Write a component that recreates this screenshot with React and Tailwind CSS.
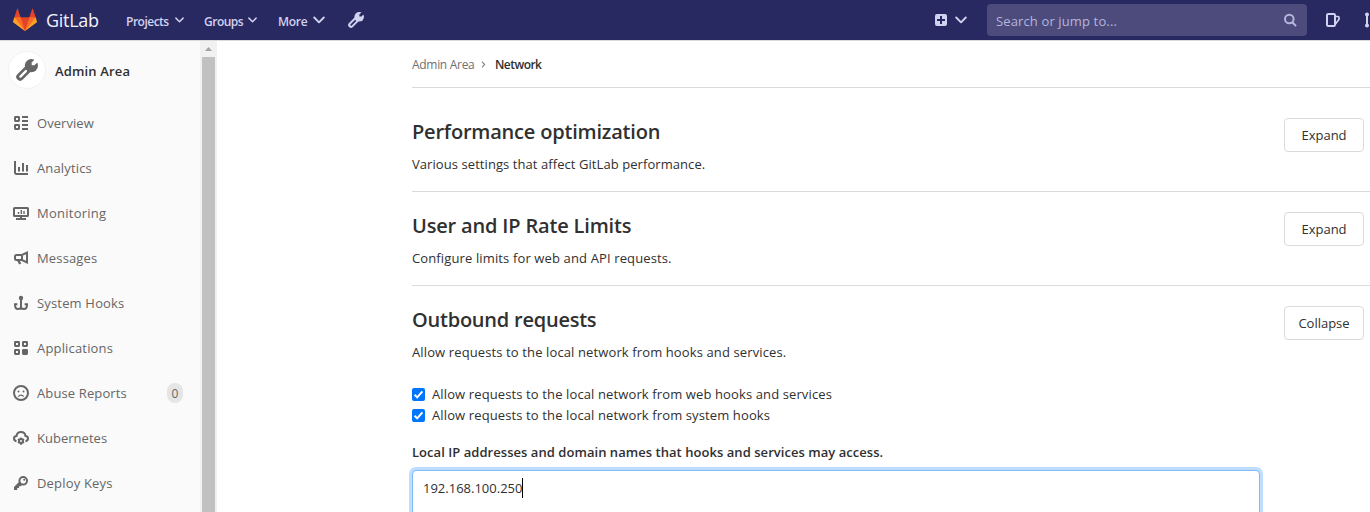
import React, { useId } from "react";

function Icon({ children, className = "size-4" }) {
  return (
    <svg
      viewBox="0 0 16 16"
      className={className + " shrink-0"}
      fill="none"
      stroke="currentColor"
      strokeWidth="2"
    >
      {children}
    </svg>
  );
}

function Chevron({ className }) {
  return (
    <svg viewBox="0 0 12 8" className={className + " shrink-0"} fill="none" stroke="currentColor" strokeWidth="1.9" strokeLinecap="round" strokeLinejoin="round">
      <path d="M1.2 1.5 6 6.3l4.8-4.8" />
    </svg>
  );
}

function Wrench({ className }) {
  const id = useId();
  return (
    <svg viewBox="0 0 16 16" className={className + " shrink-0"}>
      <mask id={id} maskUnits="userSpaceOnUse" x="0" y="0" width="16" height="16">
        <circle cx="11.2" cy="4.8" r="4.8" fill="#fff" />
        <path d="M3 13l6-6" stroke="#fff" strokeWidth="5.600" strokeLinecap="round" />
        <path d="M3.200 12.800l4-4" stroke="#000" strokeWidth="1.700" strokeLinecap="round" />
        <path d="M16.300 -2.500 11.400 2.600v2h2l5-5z" fill="#000" />
      </mask>
      <rect width="16" height="16" fill="currentColor" mask={`url(#${id})`} />
    </svg>
  );
}

function Logo() {
  return (
    <svg viewBox="0 0 36 36" className="size-6 shrink-0">
      <path fill="#e24329" d="M2 14l9.380 9v-9l-4-12.280c-.205-.632-1.176-.632-1.380 0z" />
      <path fill="#e24329" d="M34 14l-9.380 9v-9l4-12.280c.205-.632 1.176-.632 1.380 0z" />
      <path fill="#e24329" d="M18 34.380 3 14h30z" />
      <path fill="#fc6d26" d="M18 34.380 11.380 14H2l4 11z" />
      <path fill="#fc6d26" d="M18 34.380 24.620 14H34l-4 11z" />
      <path fill="#fca326" d="M2 14 .1 20.160c-.18.565 0 1.200.5 1.560l17.420 12.660z" />
      <path fill="#fca326" d="M34 14l1.900 6.160c.18.565 0 1.200-.5 1.560L18 34.380z" />
    </svg>
  );
}

const items = [
  {
    label: "Overview",
    track: "tracking-[0.05px]",
    icon: (
      <>
        <rect x="2" y="2" width="4" height="4" rx=".4" />
        <rect x="2" y="10" width="4" height="4" rx=".4" />
        <path d="M9 2h6M9 6h6M9 10h6M9 14h6" />
      </>
    ),
  },
  {
    label: "Analytics",
    track: "tracking-[0.15px]",
    icon: <path d="M2 1v11.500a1.500 1.500 0 0 0 1.500 1.500H15M6 7v4.500M10 3v8.500M14 5v6.500" />,
  },
  {
    label: "Monitoring",
    track: "tracking-[0.25px]",
    icon: (
      <>
        <rect x="1" y="3" width="14" height="8" rx=".6" />
        <path d="M3 14h10M8 11v3" />
        <path d="M5.500 7v2M8.300 5v4M11 6v3" strokeWidth="1.400" />
      </>
    ),
  },
  {
    label: "Messages",
    track: "tracking-[0.15px]",
    icon: (
      <>
        <path d="M14 2.500v10L9 10H3.500A1.500 1.500 0 0 1 2 8.500v-2A1.500 1.500 0 0 1 3.500 5H9zM9 5v5" />
        <path d="M5 10l2.200 4" strokeWidth="2.400" />
      </>
    ),
  },
  {
    label: "System Hooks",
    track: "tracking-[0.17px]",
    icon: (
      <>
        <circle cx="8" cy="3" r="2.200" fill="currentColor" stroke="none" />
        <path d="M8 4v10M2 9.500c0 3 1 4.500 3 4.500 1.700 0 3-.8 3-2.200 0 1.400 1.300 2.200 3 2.200 2 0 3-1.500 3-4.500M1 9.200h3.400M11.600 9.200H15" />
      </>
    ),
  },
  {
    label: "Applications",
    track: "tracking-[0.17px]",
    icon: (
      <>
        <rect x="2" y="2" width="4" height="4" rx=".4" />
        <rect x="10" y="2" width="4" height="4" rx=".4" />
        <rect x="2" y="10" width="4" height="4" rx=".4" />
        <rect x="10" y="10" width="4" height="4" rx=".4" fill="currentColor" />
      </>
    ),
  },
  {
    label: "Abuse Reports",
    track: "tracking-[0.12px]",
    badge: "0",
    icon: (
      <>
        <circle cx="8" cy="8" r="7" />
        <path d="M5.400 11.600a3 3 0 0 1 5.200 0" strokeWidth="1.300" />
        <circle cx="5.500" cy="6.500" r="1" fill="currentColor" stroke="none" />
        <circle cx="10.500" cy="6.500" r="1" fill="currentColor" stroke="none" />
      </>
    ),
  },
  {
    label: "Kubernetes",
    track: "tracking-[0.02px]",
    icon: (
      <>
        <path d="M3.500 11.200C1.900 10.900 1 9.800 1 8.600c0-1.500 1.200-2.500 2.500-2.500C3.800 3.700 5.700 2 8 2s4.200 1.700 4.500 4.100c1.300 0 2.500 1 2.500 2.500 0 1.200-.9 2.300-2.500 2.600" />
        <circle cx="8" cy="11" r="2" />
        <path d="M8 7.500v1.500M8 13v2M4.900 9.200l1.400.8M9.700 12l1.400.8M11.100 9.200l-1.400.8M6.300 12l-1.400.8" strokeWidth="1.500" />
      </>
    ),
  },
  {
    label: "Deploy Keys",
    track: "tracking-[0.18px]",
    icon: (
      <>
        <circle cx="10.200" cy="5.800" r="3.800" />
        <circle cx="11.200" cy="4.800" r="1" fill="currentColor" stroke="none" />
        <path d="M6.200 6.800 1 12v3h3.200v-2H6v-1.800h1.500L9.200 9.800z" fill="currentColor" stroke="none" />
      </>
    ),
  },
];

function Section({ title, titleClass, text, textClass, action }) {
  return (
    <div className="flex h-[93px] w-[952px] justify-between">
      <div className="flex flex-col whitespace-nowrap">
        <h2 className={"mt-[19px] h-[30px] text-[20px] leading-[30px] font-semibold text-[#303030] " + titleClass}>{title}</h2>
        <p className={"mt-[7px] h-5 text-[13px] leading-5 " + textClass}>{text}</p>
      </div>
      <button className="mt-5 flex h-[34px] w-20 items-center justify-center rounded border border-[#dbdbdb] bg-white pt-px text-[13px]">
        {action}
      </button>
    </div>
  );
}

function Check({ label, className }) {
  return (
    <label className="flex h-[21px] shrink-0 items-center whitespace-nowrap">
      <svg viewBox="0 0 13 13" className="mr-[7px] size-[13px] shrink-0">
        <rect width="13" height="13" rx="2" fill="#0075ff" />
        <path d="M2.600 6.800 5.200 9.400 10.400 3.300" fill="none" stroke="#fff" strokeWidth="2" />
      </svg>
      <span className={className}>{label}</span>
    </label>
  );
}

export default function App() {
  return (
    <div className="flex h-[512px] w-full flex-col overflow-hidden bg-white font-['Open_Sans','Noto_Sans',sans-serif] text-[13px] text-[#303030]">
      <header className="flex h-[41px] shrink-0 items-center overflow-hidden border-b border-[#dbdbdb] bg-[#292961] pl-[13px] whitespace-nowrap text-[#d1d1f0] *:shrink-0">
        <Logo />
        <span className="ml-[9px] w-[80px] text-[18px] leading-none tracking-[-0.3px] text-[#f2f2fa]">GitLab</span>
        <span className="w-[49px] pt-[3px] text-[12px] font-semibold tracking-[-0.5px]">Projects</span>
        <Chevron className="h-[6px] w-[9px]" />
        <span className="ml-[20px] w-[44px] pt-[3px] text-[12px] font-semibold tracking-[-0.5px]">Groups</span>
        <Chevron className="h-[6px] w-[9px]" />
        <span className="ml-[21px] w-[35px] pt-[3px] text-[12px] font-semibold tracking-[-0.3px]">More</span>
        <Chevron className="h-2 w-3" />
        <Wrench className="ml-[23px] size-4" />
        <svg viewBox="0 0 12 12" className="ml-[571px] size-3">
          <rect width="12" height="12" rx="2" fill="#d1d1f0" />
          <path d="M6 2v8M2 6h8" stroke="#292961" strokeWidth="2" />
        </svg>
        <Chevron className="ml-2 h-2 w-3" />
        <div className="ml-5 flex h-8 w-80 items-center justify-between rounded bg-[#4c4b7c] pr-[10px] pl-[9px] text-[#b5b5dc]">
          <span className="pt-[3px] tracking-[0.13px]">Search or jump to...</span>
          <svg viewBox="0 0 14 14" className="size-[14px]" fill="none" stroke="currentColor" strokeWidth="2">
            <circle cx="6.300" cy="6" r="4.300" />
            <path d="m9.500 9.500 3 3" strokeLinecap="round" />
          </svg>
        </div>
        <svg viewBox="0 0 16 16" className="ml-[18px] size-4" fill="none" stroke="currentColor" strokeWidth="2">
          <rect x="2" y="2" width="8" height="12" rx="1.200" />
          <path d="M10.500 4.500H13a1 1 0 0 1 1 1v1.800L10.500 12" strokeWidth="1.700" />
        </svg>
        <svg viewBox="0 0 16 16" className="ml-[23px] size-4" fill="none" stroke="currentColor" strokeWidth="2">
          <circle cx="3" cy="2.500" r="1" />
          <circle cx="3" cy="13.500" r="1" />
          <path d="M3 3v10" />
        </svg>
      </header>
      <div className="flex min-h-0 flex-1">
        <aside className="w-[200px] shrink-0 bg-[#fafafa] text-[#666]">
          <div className="flex h-[60px] items-center pb-[2px] pl-2">
            <div className="flex size-[38px] items-center justify-center rounded-full border border-[#f2f2f2] bg-white">
              <Wrench className="size-[22px]" />
            </div>
            <span className="ml-[9px] pt-[3px] text-[13px] font-semibold tracking-[0.15px] text-[#303030]">Admin Area</span>
          </div>
          <nav>
            {items.map((item) => (
              <div key={item.label} className="flex h-[45px] items-center pr-[17px] pb-px pl-[13px]">
                <Icon>{item.icon}</Icon>
                <span className={"ml-2 flex-1 pt-px " + item.track}>{item.label}</span>
                {item.badge && (
                  <span className="flex h-5 w-4 items-center justify-center rounded-full bg-[#e5e5e5] pt-px text-[12px]">{item.badge}</span>
                )}
              </div>
            ))}
          </nav>
        </aside>
        <div className="flex w-[17px] shrink-0 flex-col items-center bg-[#f1f1f1]">
          <svg viewBox="0 0 7 4" className="mt-[6px] h-1 w-[7px] shrink-0">
            <path d="M0 4 3.500 0 7 4z" fill="#a3a3a3" />
          </svg>
          <div className="mt-[6px] w-[13px] flex-1 bg-[#c1c1c1]" />
        </div>
        <main className="flex min-w-0 flex-1 flex-col overflow-hidden pl-[195px]">
          <div className="flex h-[47px] shrink-0 items-center border-b border-[#dbdbdb] pt-[2px] text-[12px] whitespace-nowrap">
            <span className="w-[69px] tracking-[-0.3px] text-[#707070]">Admin Area</span>
            <svg viewBox="0 0 5 8" className="mb-[2px] h-[7px] w-[5px]" fill="none" stroke="#868686" strokeWidth="1.300">
              <path d="m.8.8 3 3.200-3 3.200" />
            </svg>
            <span className="ml-[9px] font-semibold tracking-[-0.55px]">Network</span>
          </div>
          <div className="h-[104px] shrink-0 border-b border-[#dbdbdb] pt-[10px]">
            <Section title="Performance optimization" titleClass="tracking-[-0.2px]" text="Various settings that affect GitLab performance." textClass="tracking-[0.07px]" action="Expand" />
          </div>
          <div className="h-[94px] shrink-0 border-b border-[#dbdbdb]">
            <Section title="User and IP Rate Limits" titleClass="tracking-[-0.17px]" text="Configure limits for web and API requests." textClass="tracking-[0.13px]" action="Expand" />
          </div>
          <div className="h-[98px] shrink-0">
            <Section title="Outbound requests" titleClass="tracking-[-0.23px]" text="Allow requests to the local network from hooks and services." textClass="tracking-[0.12px]" action="Collapse" />
          </div>
          <Check label="Allow requests to the local network from web hooks and services" className="tracking-[0.12px]" />
          <Check label="Allow requests to the local network from system hooks" className="tracking-[0.12px]" />
          <div className="mt-[16px] h-5 shrink-0 leading-5 font-semibold tracking-[0.045px] whitespace-nowrap">
            Local IP addresses and domain names that hooks and services may access.
          </div>
          <div className="mt-2 flex h-20 w-[848px] shrink-0 rounded border border-[#80bdff] bg-white pt-[7px] pl-[10px] shadow-[0_0_0_3px_#bfdeff]">
            <span className="h-5 border-r border-black leading-5">192.168.100.250</span>
          </div>
        </main>
      </div>
    </div>
  );
}
